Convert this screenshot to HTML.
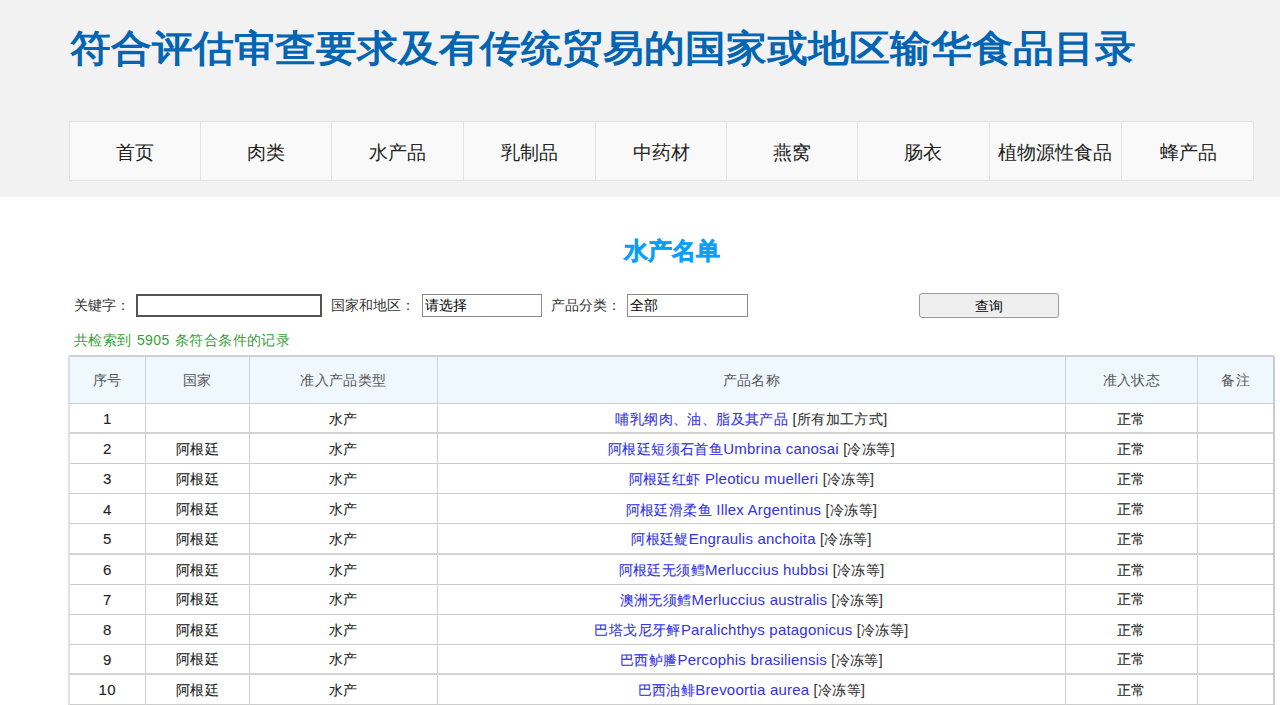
<!DOCTYPE html>
<html><head><meta charset="utf-8">
<style>
*{box-sizing:border-box}
html,body{margin:0;padding:0;background:#fff;font-family:"Liberation Sans",sans-serif;color:#333;overflow:hidden;width:1280px;height:705px;position:relative}
#hdr{position:absolute;left:0;top:0;width:1280px;height:196.5px;background:#f2f2f2}
#title{position:absolute;left:70px;top:25.8px;font-size:42px;line-height:50px;font-weight:bold;color:#0465b3;white-space:nowrap;transform:scale(0.976,0.886);transform-origin:0 0}
#nav{position:absolute;left:69px;top:121px;width:1185px;height:60px;border:1px solid #e2e2e2;background:#f9f9f9}
#nav div{position:absolute;top:0;height:58px;border-right:1px solid #e2e2e2;text-align:center;font-size:19px;line-height:62px;color:#222}
#sec{position:absolute;left:571.5px;width:200px;top:236px;text-align:center;font-size:24px;line-height:30px;font-weight:bold;color:#08a0f8;-webkit-text-stroke:0.6px currentColor}
.lbl{position:absolute;top:295px;font-size:14px;line-height:20px;color:#333;white-space:nowrap}
.inp{position:absolute;top:294px;height:23px;background:#fff;font-size:14px;line-height:21px;color:#000;padding-left:2px;white-space:nowrap}
#kw{left:136px;width:186px;border:2px solid #555}
#s1{left:422px;width:120px;border:1px solid #8a8a8a}
#s2{left:627px;width:121px;border:1px solid #8a8a8a}
#btn{position:absolute;left:919px;top:293px;width:140px;height:25px;border:1px solid #9a9a9a;border-radius:3px;background:#efefef;font-size:14px;line-height:25px;text-align:center;color:#000}
#cnt{position:absolute;left:74px;top:330px;font-size:14px;line-height:20px;color:#35a035;white-space:nowrap;letter-spacing:0.4px;word-spacing:1px}
.thbg{position:absolute;background:#eef8fe}
.th{position:absolute;text-align:center;font-size:14px;color:#555;white-space:nowrap;letter-spacing:0.4px}
.td{position:absolute;text-align:center;font-size:14px;color:#222;white-space:nowrap;letter-spacing:0.4px;-webkit-text-stroke:0.1px currentColor}
.td a{color:#3232e8;text-decoration:none}
.lat{font-size:15px;letter-spacing:0.2px;-webkit-text-stroke:0}
.br{color:#333}
.num{font-size:15px;letter-spacing:0.3px}
.hl{position:absolute;left:69px;width:1205px;height:1px;background:#cccccc}
.hl2{position:absolute;left:69px;width:1205px;height:2px;background:#d2d2d2}
.vl{position:absolute;top:355.5px;width:1px;height:350px;background:#d2d2d4}
.vl0{position:absolute;top:355.5px;width:2px;height:350px;background:#e0e0e0}
</style></head><body>
<div id="hdr">
<div id="title">符合评估审查要求及有传统贸易的国家或地区输华食品目录</div>
<div id="nav">
<div style="left:0px;width:131px">首页</div>
<div style="left:131px;width:131px">肉类</div>
<div style="left:262px;width:131.5px">水产品</div>
<div style="left:393.5px;width:132.5px">乳制品</div>
<div style="left:526px;width:131px">中药材</div>
<div style="left:657px;width:131px">燕窝</div>
<div style="left:788px;width:131.5px">肠衣</div>
<div style="left:919.5px;width:132.5px">植物源性食品</div>
<div style="left:1052px;width:132px;border-right:0">蜂产品</div>
</div>
</div>
<div id="sec">水产名单</div>
<div class="lbl" style="left:74px">关键字：</div>
<div class="inp" id="kw"></div>
<div class="lbl" style="left:331px">国家和地区：</div>
<div class="inp" id="s1">请选择</div>
<div class="lbl" style="left:551px">产品分类：</div>
<div class="inp" id="s2">全部</div>
<div id="btn">查询</div>
<div id="cnt">共检索到 5905 条符合条件的记录</div>
<div class="thbg" style="left:69px;top:355.5px;width:1205px;height:47.5px"></div>
<div class="th" style="left:69px;top:356.5px;width:76.5px;height:47.5px;line-height:47.5px">序号</div>
<div class="th" style="left:145.5px;top:356.5px;width:104.0px;height:47.5px;line-height:47.5px">国家</div>
<div class="th" style="left:249.5px;top:356.5px;width:188.0px;height:47.5px;line-height:47.5px">准入产品类型</div>
<div class="th" style="left:437.5px;top:356.5px;width:628.0px;height:47.5px;line-height:47.5px">产品名称</div>
<div class="th" style="left:1065.5px;top:356.5px;width:132.0px;height:47.5px;line-height:47.5px">准入状态</div>
<div class="th" style="left:1197.5px;top:356.5px;width:76.5px;height:47.5px;line-height:47.5px">备注</div>
<div class="td" style="left:69px;top:404px;width:76.5px;height:30px;line-height:30px"><span class="num">1</span></div>
<div class="td" style="left:249.5px;top:404px;width:188.0px;height:30px;line-height:30px">水产</div>
<div class="td" style="left:437.5px;top:404px;width:628.0px;height:30px;line-height:30px"><a>哺乳纲肉、油、脂及其产品</a> <span class="br">[所有加工方式]</span></div>
<div class="td" style="left:1065.5px;top:404px;width:132.0px;height:30px;line-height:30px">正常</div>
<div class="td" style="left:69px;top:434px;width:76.5px;height:30.399999999999977px;line-height:30.399999999999977px"><span class="num">2</span></div>
<div class="td" style="left:145.5px;top:434px;width:104.0px;height:30.399999999999977px;line-height:30.399999999999977px">阿根廷</div>
<div class="td" style="left:249.5px;top:434px;width:188.0px;height:30.399999999999977px;line-height:30.399999999999977px">水产</div>
<div class="td" style="left:437.5px;top:434px;width:628.0px;height:30.399999999999977px;line-height:30.399999999999977px"><a>阿根廷短须石首鱼<span class="lat">Umbrina canosai</span></a> <span class="br">[冷冻等]</span></div>
<div class="td" style="left:1065.5px;top:434px;width:132.0px;height:30.399999999999977px;line-height:30.399999999999977px">正常</div>
<div class="td" style="left:69px;top:464.4px;width:76.5px;height:30.200000000000045px;line-height:30.200000000000045px"><span class="num">3</span></div>
<div class="td" style="left:145.5px;top:464.4px;width:104.0px;height:30.200000000000045px;line-height:30.200000000000045px">阿根廷</div>
<div class="td" style="left:249.5px;top:464.4px;width:188.0px;height:30.200000000000045px;line-height:30.200000000000045px">水产</div>
<div class="td" style="left:437.5px;top:464.4px;width:628.0px;height:30.200000000000045px;line-height:30.200000000000045px"><a>阿根廷红虾 <span class="lat">Pleoticu muelleri</span></a> <span class="br">[冷冻等]</span></div>
<div class="td" style="left:1065.5px;top:464.4px;width:132.0px;height:30.200000000000045px;line-height:30.200000000000045px">正常</div>
<div class="td" style="left:69px;top:494.6px;width:76.5px;height:29.799999999999955px;line-height:29.799999999999955px"><span class="num">4</span></div>
<div class="td" style="left:145.5px;top:494.6px;width:104.0px;height:29.799999999999955px;line-height:29.799999999999955px">阿根廷</div>
<div class="td" style="left:249.5px;top:494.6px;width:188.0px;height:29.799999999999955px;line-height:29.799999999999955px">水产</div>
<div class="td" style="left:437.5px;top:494.6px;width:628.0px;height:29.799999999999955px;line-height:29.799999999999955px"><a>阿根廷滑柔鱼 <span class="lat">Illex Argentinus</span></a> <span class="br">[冷冻等]</span></div>
<div class="td" style="left:1065.5px;top:494.6px;width:132.0px;height:29.799999999999955px;line-height:29.799999999999955px">正常</div>
<div class="td" style="left:69px;top:524.4px;width:76.5px;height:30.800000000000068px;line-height:30.800000000000068px"><span class="num">5</span></div>
<div class="td" style="left:145.5px;top:524.4px;width:104.0px;height:30.800000000000068px;line-height:30.800000000000068px">阿根廷</div>
<div class="td" style="left:249.5px;top:524.4px;width:188.0px;height:30.800000000000068px;line-height:30.800000000000068px">水产</div>
<div class="td" style="left:437.5px;top:524.4px;width:628.0px;height:30.800000000000068px;line-height:30.800000000000068px"><a>阿根廷鳀<span class="lat">Engraulis anchoita</span></a> <span class="br">[冷冻等]</span></div>
<div class="td" style="left:1065.5px;top:524.4px;width:132.0px;height:30.800000000000068px;line-height:30.800000000000068px">正常</div>
<div class="td" style="left:69px;top:555.2px;width:76.5px;height:30.09999999999991px;line-height:30.09999999999991px"><span class="num">6</span></div>
<div class="td" style="left:145.5px;top:555.2px;width:104.0px;height:30.09999999999991px;line-height:30.09999999999991px">阿根廷</div>
<div class="td" style="left:249.5px;top:555.2px;width:188.0px;height:30.09999999999991px;line-height:30.09999999999991px">水产</div>
<div class="td" style="left:437.5px;top:555.2px;width:628.0px;height:30.09999999999991px;line-height:30.09999999999991px"><a>阿根廷无须鳕<span class="lat">Merluccius hubbsi</span></a> <span class="br">[冷冻等]</span></div>
<div class="td" style="left:1065.5px;top:555.2px;width:132.0px;height:30.09999999999991px;line-height:30.09999999999991px">正常</div>
<div class="td" style="left:69px;top:585.3px;width:76.5px;height:29.800000000000068px;line-height:29.800000000000068px"><span class="num">7</span></div>
<div class="td" style="left:145.5px;top:585.3px;width:104.0px;height:29.800000000000068px;line-height:29.800000000000068px">阿根廷</div>
<div class="td" style="left:249.5px;top:585.3px;width:188.0px;height:29.800000000000068px;line-height:29.800000000000068px">水产</div>
<div class="td" style="left:437.5px;top:585.3px;width:628.0px;height:29.800000000000068px;line-height:29.800000000000068px"><a>澳洲无须鳕<span class="lat">Merluccius australis</span></a> <span class="br">[冷冻等]</span></div>
<div class="td" style="left:1065.5px;top:585.3px;width:132.0px;height:29.800000000000068px;line-height:29.800000000000068px">正常</div>
<div class="td" style="left:69px;top:615.1px;width:76.5px;height:30.299999999999955px;line-height:30.299999999999955px"><span class="num">8</span></div>
<div class="td" style="left:145.5px;top:615.1px;width:104.0px;height:30.299999999999955px;line-height:30.299999999999955px">阿根廷</div>
<div class="td" style="left:249.5px;top:615.1px;width:188.0px;height:30.299999999999955px;line-height:30.299999999999955px">水产</div>
<div class="td" style="left:437.5px;top:615.1px;width:628.0px;height:30.299999999999955px;line-height:30.299999999999955px"><a>巴塔戈尼牙鲆<span class="lat">Paralichthys patagonicus</span></a> <span class="br">[冷冻等]</span></div>
<div class="td" style="left:1065.5px;top:615.1px;width:132.0px;height:30.299999999999955px;line-height:30.299999999999955px">正常</div>
<div class="td" style="left:69px;top:645.4px;width:76.5px;height:29.899999999999977px;line-height:29.899999999999977px"><span class="num">9</span></div>
<div class="td" style="left:145.5px;top:645.4px;width:104.0px;height:29.899999999999977px;line-height:29.899999999999977px">阿根廷</div>
<div class="td" style="left:249.5px;top:645.4px;width:188.0px;height:29.899999999999977px;line-height:29.899999999999977px">水产</div>
<div class="td" style="left:437.5px;top:645.4px;width:628.0px;height:29.899999999999977px;line-height:29.899999999999977px"><a>巴西鲈䲢<span class="lat">Percophis brasiliensis</span></a> <span class="br">[冷冻等]</span></div>
<div class="td" style="left:1065.5px;top:645.4px;width:132.0px;height:29.899999999999977px;line-height:29.899999999999977px">正常</div>
<div class="td" style="left:69px;top:675.3px;width:76.5px;height:30.200000000000045px;line-height:30.200000000000045px"><span class="num">10</span></div>
<div class="td" style="left:145.5px;top:675.3px;width:104.0px;height:30.200000000000045px;line-height:30.200000000000045px">阿根廷</div>
<div class="td" style="left:249.5px;top:675.3px;width:188.0px;height:30.200000000000045px;line-height:30.200000000000045px">水产</div>
<div class="td" style="left:437.5px;top:675.3px;width:628.0px;height:30.200000000000045px;line-height:30.200000000000045px"><a>巴西油鲱<span class="lat">Brevoortia aurea</span></a> <span class="br">[冷冻等]</span></div>
<div class="td" style="left:1065.5px;top:675.3px;width:132.0px;height:30.200000000000045px;line-height:30.200000000000045px">正常</div>
<div class="hl2" style="top:355px;background:#cdd0d4"></div>
<div class="hl" style="top:402.5px"></div>
<div class="hl2" style="top:432px"></div>
<div class="hl" style="top:462.9px"></div>
<div class="hl" style="top:493.1px"></div>
<div class="hl" style="top:522.9px"></div>
<div class="hl2" style="top:553.2px"></div>
<div class="hl" style="top:583.8px"></div>
<div class="hl" style="top:613.6px"></div>
<div class="hl" style="top:643.9px"></div>
<div class="hl2" style="top:673.3px"></div>
<div class="hl" style="top:704.0px"></div>
<div class="vl0" style="left:68px"></div>
<div class="vl" style="left:145.0px"></div>
<div class="vl" style="left:249.0px"></div>
<div class="vl" style="left:437.0px"></div>
<div class="vl" style="left:1065.0px"></div>
<div class="vl" style="left:1197.0px"></div>
<div class="vl0" style="left:1273px;background:#cbcbcb"></div>
</body></html>
